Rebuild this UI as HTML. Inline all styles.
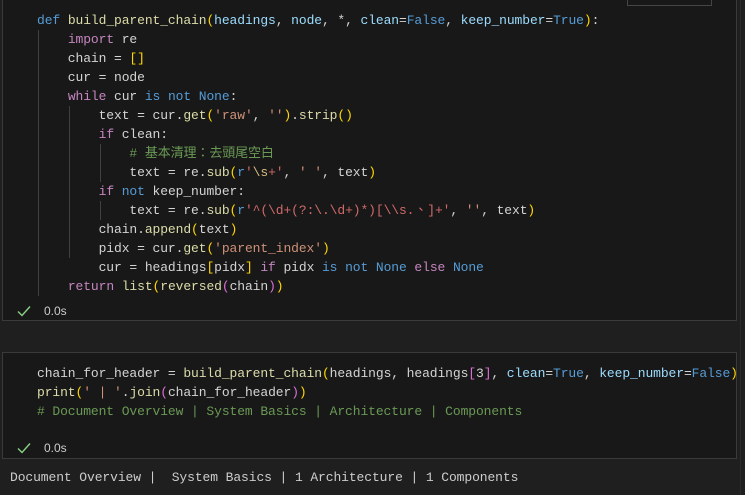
<!DOCTYPE html>
<html><head><meta charset="utf-8"><style>
body{margin:0;width:745px;height:495px;background:#1f1f1f;overflow:hidden;position:relative;font-family:"Liberation Mono","Noto Sans CJK TC",monospace}
.cell{position:absolute;left:2px;width:735px;background:#181818;border:1px solid #3a3a3a;box-sizing:border-box}
pre{margin:0;position:absolute;left:37px;font-family:"Liberation Mono","Noto Sans CJK TC",monospace;font-size:13px;letter-spacing:-0.1px;line-height:19px;color:#d4d4d4;white-space:pre}
.k{color:#569cd6}.c{color:#c586c0}.f{color:#dcdcaa}.v{color:#9cdcfe}.s{color:#ce9178}.m{color:#6a9955}.r{color:#d16969}.e{color:#d7ba7d}
.b1{color:#ffd700}.b2{color:#da70d6}.b3{color:#179fff}
.g{position:absolute;width:1px;background:#404040}
.st{position:absolute;left:17px;font-family:"Liberation Sans",sans-serif;font-size:12px;color:#cccccc}
.st svg{position:absolute;left:0;top:1px}
.st span{position:absolute;left:27px;top:0}
</style></head><body>
<div class="cell" style="top:-2px;height:323px"></div>
<div style="position:absolute;left:627px;top:-1px;width:85px;height:7px;border:1px solid #454545;box-sizing:border-box"></div>
<div style="position:absolute;left:740px;top:0;width:1px;height:495px;background:#2b2b2b"></div>
<div class="g" style="left:38px;top:30px;height:266px"></div>
<div class="g" style="left:69px;top:106px;height:152px"></div>
<div class="g" style="left:100px;top:144px;height:38px"></div>
<div class="g" style="left:100px;top:201px;height:19px"></div>
<pre style="top:11px"><span class="k">def</span> <span class="f">build_parent_chain</span><span class="b1">(</span><span class="v">headings</span>, <span class="v">node</span>, *, <span class="v">clean</span>=<span class="k">False</span>, <span class="v">keep_number</span>=<span class="k">True</span><span class="b1">)</span>:
    <span class="c">import</span> re
    chain = <span class="b1">[]</span>
    cur = node
    <span class="c">while</span> cur <span class="k">is</span> <span class="k">not</span> <span class="k">None</span>:
        text = cur.<span class="f">get</span><span class="b1">(</span><span class="s">'raw'</span>, <span class="s">''</span><span class="b1">)</span>.<span class="f">strip</span><span class="b1">()</span>
        <span class="c">if</span> clean:
            <span class="m"># 基本清理：去頭尾空白</span>
            text = re.<span class="f">sub</span><span class="b1">(</span><span class="k">r</span><span class="r">'</span><span class="e">\s</span><span class="r">+'</span>, <span class="s">' '</span>, text<span class="b1">)</span>
        <span class="c">if</span> <span class="k">not</span> keep_number:
            text = re.<span class="f">sub</span><span class="b1">(</span><span class="k">r</span><span class="r">'^(\d+(?:\.\d+)*)[\\s.、]+'</span>, <span class="s">''</span>, text<span class="b1">)</span>
        chain.<span class="f">append</span><span class="b1">(</span>text<span class="b1">)</span>
        pidx = cur.<span class="f">get</span><span class="b1">(</span><span class="s">'parent_index'</span><span class="b1">)</span>
        cur = headings<span class="b1">[</span>pidx<span class="b1">]</span> <span class="c">if</span> pidx <span class="k">is</span> <span class="k">not</span> <span class="k">None</span> <span class="c">else</span> <span class="k">None</span>
    <span class="c">return</span> <span class="f">list</span><span class="b1">(</span><span class="f">reversed</span><span class="b2">(</span>chain<span class="b2">)</span><span class="b1">)</span></pre>
<div class="st" style="top:304px"><svg width="14" height="12" viewBox="0 0 14 12"><path d="M1 6.5 L5 10.5 L13 1.5" stroke="#89d185" stroke-width="1.4" fill="none"/></svg><span>0.0s</span></div>

<div class="cell" style="top:352px;height:107px"></div>
<pre style="top:364px">chain_for_header = <span class="f">build_parent_chain</span><span class="b1">(</span>headings, headings<span class="b2">[</span>3<span class="b2">]</span>, <span class="v">clean</span>=<span class="k">True</span>, <span class="v">keep_number</span>=<span class="k">False</span><span class="b1">)</span>
<span class="f">print</span><span class="b1">(</span><span class="s">' | '</span>.<span class="f">join</span><span class="b2">(</span>chain_for_header<span class="b2">)</span><span class="b1">)</span>
<span class="m"># Document Overview | System Basics | Architecture | Components</span></pre>
<div class="st" style="top:441px"><svg width="14" height="12" viewBox="0 0 14 12"><path d="M1 6.5 L5 10.5 L13 1.5" stroke="#89d185" stroke-width="1.4" fill="none"/></svg><span>0.0s</span></div>

<pre style="top:468px;left:10px;color:#cccccc">Document Overview |  System Basics | 1 Architecture | 1 Components</pre>
</body></html>
